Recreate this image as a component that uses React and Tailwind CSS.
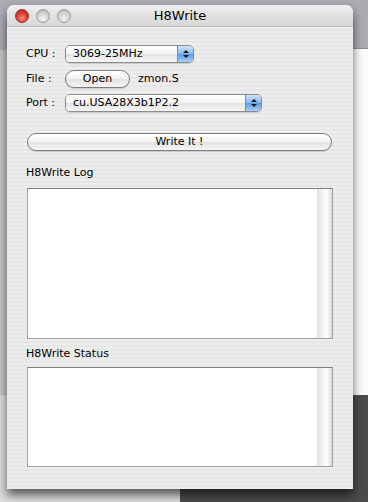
import React from "react";

const font = { fontFamily: '"DejaVu Sans", "Liberation Sans", sans-serif' };

function Light({ color }) {
    const red = color === "red";
    return (
        <span
            className={`block h-[14px] w-[14px] rounded-full border ${red
                ? "border-[#9a2a25] bg-[radial-gradient(circle_at_50%_70%,#ff8a7a_0%,#e0463b_45%,#a8221c_100%)]"
                : "border-[#9c9c9c] bg-[radial-gradient(circle_at_50%_70%,#f4f4f4_0%,#d4d4d4_50%,#a9a9a9_100%)]"
                }`}
        />
    );
}

function Popup({ value, width }) {
    return (
        <div
            className={`flex h-[18px] ${width} overflow-hidden rounded-[5px] border border-[#8c8c8c] shadow-[0_1px_1px_rgba(0,0,0,0.15)]`}
        >
            <div className="flex flex-1 items-center bg-[linear-gradient(#ffffff,#f4f4f4_50%,#e4e4e4_51%,#f4f4f4)] pl-[7px] text-[11px] text-black">
                {value}
            </div>
            <div className="flex w-[16px] flex-col items-center justify-center gap-[2px] border-l border-[#6d8fc0] bg-[linear-gradient(#cfe3fb,#87b7ee_50%,#5b98e4_51%,#a6d0fa)]">
                <span className="block h-0 w-0 border-x-[3px] border-b-[3px] border-x-transparent border-b-[#1a1a1a]" />
                <span className="block h-0 w-0 border-x-[3px] border-t-[3px] border-x-transparent border-t-[#1a1a1a]" />
            </div>
        </div>
    );
}

function Pill({ label, width }) {
    return (
        <div
            className={`flex h-[18px] ${width} items-center justify-center rounded-full border border-[#7e7e7e] bg-[linear-gradient(#ffffff,#f2f2f2_50%,#e2e2e2_51%,#f6f6f6)] text-[11px] text-black shadow-[0_1px_1px_rgba(0,0,0,0.15)]`}
        >
            {label}
        </div>
    );
}

function TextBox({ height }) {
    return (
        <div className={`flex ${height} w-[306px] border border-[#a0a0a0] border-t-[#808080] bg-white`}>
            <div className="flex-1" />
            <div className="w-[15px] bg-[linear-gradient(90deg,#e4e4e4,#f8f8f8_40%,#ffffff_60%,#dcdcdc)] border-l border-[#dddddd]" />
        </div>
    );
}

export default function App() {
    return (
        <div className="relative h-[502px] w-[368px] overflow-hidden bg-[#a9abb0]" style={font}>
            {/* desktop behind */}
            <div className="absolute left-0 top-[50px] h-[452px] w-[8px] bg-[#c4c4c4]" />
            <div className="absolute left-[300px] top-[48px] h-[347px] w-[68px] border-t border-[#8c8c8c] bg-[linear-gradient(90deg,#d8d8d8,#f6f6f6_40%,#fbfbfb)]" />
            <div className="absolute left-[180px] top-[395px] h-[107px] w-[188px] bg-[#4b4b4b]" />
            <div className="absolute left-0 top-[395px] h-[107px] w-[180px] bg-[#dcdcdc]" />

            {/* window */}
            <div className="absolute left-[7px] top-[5px] flex h-[484px] w-[346px] flex-col overflow-hidden rounded-t-[7px] bg-[repeating-linear-gradient(0deg,#ededed_0px,#ededed_2px,#e6e6e6_2px,#e6e6e6_4px)] shadow-[0_6px_10px_rgba(0,0,0,0.6)]">
                <div className="relative flex h-[22px] items-center border-b border-[#bdbdbd] bg-[linear-gradient(#f0f0f0,#e2e2e2_50%,#d8d8d8)] pl-[8px]">
                    <div className="flex gap-[7px]">
                        <Light color="red" />
                        <Light />
                        <Light />
                    </div>
                    <div className="absolute inset-x-0 text-center text-[13px] text-black">H8Write</div>
                </div>

                <div className="flex flex-col pl-[19px] text-[11px] text-black">
                    <div className="mt-[18px] flex items-center">
                        <span className="w-[39px]">CPU :</span>
                        <Popup value="3069-25MHz" width="w-[129px]" />
                    </div>
                    <div className="mt-[7px] flex items-center">
                        <span className="w-[39px]">File :</span>
                        <Pill label="Open" width="w-[65px]" />
                        <span className="ml-[8px]">zmon.S</span>
                    </div>
                    <div className="mt-[6px] flex items-center">
                        <span className="w-[39px]">Port :</span>
                        <Popup value="cu.USA28X3b1P2.2" width="w-[197px]" />
                    </div>

                    <div className="mt-[21px] pl-[1px]">
                        <Pill label="Write It !" width="w-[305px]" />
                    </div>

                    <div className="mt-[15px] h-[14px] leading-[14px]">H8Write Log</div>
                    <div className="mt-[8px] pl-[1px]">
                        <TextBox height="h-[151px]" />
                    </div>

                    <div className="mt-[8px] h-[14px] leading-[14px]">H8Write Status</div>
                    <div className="mt-[6px] pl-[1px]">
                        <TextBox height="h-[100px]" />
                    </div>
                </div>
            </div>
        </div>
    );
}
